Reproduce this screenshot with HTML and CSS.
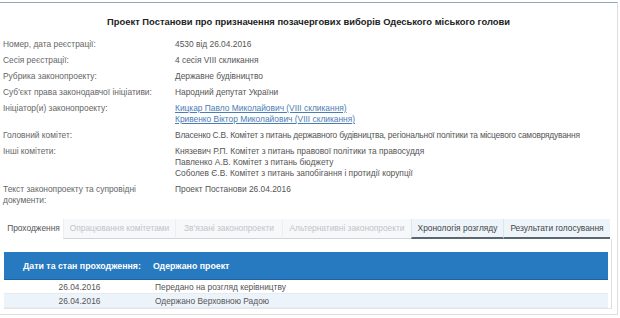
FILE: index.html
```html
<!DOCTYPE html>
<html lang="uk">
<head>
    <meta charset="UTF-8">
    <title>Проект Постанови</title>
    <link rel="stylesheet" href="styles.css">
</head>
<body>

<div id="card">
    <h1 class="title">Проект Постанови про призначення позачергових виборів Одеського міського голови</h1>

    <div class="info">
        <div class="label">Номер, дата реєстрації:</div>
        <div class="value">4530 від 26.04.2016</div>

        <div class="label">Сесія реєстрації:</div>
        <div class="value">4 сесія VIII скликання</div>

        <div class="label">Рубрика законопроекту:</div>
        <div class="value">Державне будівництво</div>

        <div class="label">Суб'єкт права законодавчої ініціативи:</div>
        <div class="value">Народний депутат України</div>

        <div class="label">Ініціатор(и) законопроекту:</div>
        <div class="value">
            <a href="#">Кицкар Павло Миколайович (VIII скликання)</a><br>
            <a href="#">Кривенко Віктор Миколайович (VIII скликання)</a>
        </div>

        <div class="label">Головний комітет:</div>
        <div class="value tight">Власенко С.В. Комітет з питань державного будівництва, регіональної політики та місцевого самоврядування</div>

        <div class="label">Інші комітети:</div>
        <div class="value">
            Князевич Р.П. Комітет з питань правової політики та правосуддя<br>
            Павленко А.В. Комітет з питань бюджету<br>
            Соболев Є.В. Комітет з питань запобігання і протидії корупції
        </div>

        <div class="label">Текст законопроекту та супровідні<br>документи:</div>
        <div class="value">Проект Постанови 26.04.2016</div>
    </div>

    <ul class="tabs">
        <li class="tab current">Проходження</li>
        <li class="tab off w1">Опрацювання комітетами</li>
        <li class="tab off w2">Зв'язані законопроекти</li>
        <li class="tab off w3">Альтернативні законопроекти</li>
        <li class="tab on w4">Хронологія розгляду</li>
        <li class="tab on w5">Результати голосування</li>
    </ul>

    <div class="panel">
        <div class="head">
            <div class="date-col">Дати та стан проходження:</div>
            <div>Одержано проект</div>
        </div>
        <div class="row">
            <div class="date-col">26.04.2016</div>
            <div>Передано на розгляд керівництву</div>
        </div>
        <div class="row alt">
            <div class="date-col">26.04.2016</div>
            <div>Одержано Верховною Радою</div>
        </div>
    </div>
</div>

</body>
</html>
```

FILE: styles.css
```css
body {
    margin: 0;
    background-color: white;
    font-family: "Liberation Sans", Arial, sans-serif;
    font-size: 8.4px;
    color: #555;
}
#card {
    width: 618px;
    height: 313px;
    margin-top: 2px;
    border-top: 1px solid #8ea8b8;
    border-right: 1px solid #ddd;
    border-bottom: 1px solid #ddd;
    box-sizing: border-box;
}
.title {
    margin: 0;
    padding: 13px 0 0 0;
    height: 23px;
    text-align: center;
    font-size: 9.4px;
    font-weight: bold;
    color: #222;
}
.info {
    display: grid;
    grid-template-columns: 172px 1fr;
    padding-left: 3px;
    line-height: 11px;
}
.label,
.value {
    padding-bottom: 5px;
    white-space: nowrap;
}
.label {
    color: #666;
}
.value {
    color: #555;
}
.value.tight {
    letter-spacing: -0.2px;
}
.value a {
    color: #4b7db3;
}
.tabs {
    display: flex;
    list-style: none;
    margin: 8px 0 0 4px;
    padding: 0;
    width: 606px;
}
.tab {
    height: 20px;
    line-height: 19px;
    text-align: center;
    box-sizing: border-box;
    white-space: nowrap;
}
.tab.current {
    width: 59px;
    color: #555;
    background-color: white;
}
.tab.off {
    color: #c0c4c8;
    background-color: #f7f8f9;
    border-bottom: 1px solid #cfd4d8;
    border-left: 1px solid #eceef0;
}
.tab.on {
    color: #444;
    background-color: #edf4fa;
    border-bottom: 2px solid #5b6670;
    border-left: 1px solid #dde4ea;
}
.w1 { width: 112px; }
.w2 { width: 107px; }
.w3 { width: 129px; }
.w4 { width: 92px; }
.w5 { width: 107px; }
.panel {
    margin: 0 5px 0 4px;
    padding: 13px 3px 0 0;
    height: 56px;
    border-right: 1px solid #ddd;
    border-bottom: 1px solid #e4e4e4;
}
.head {
    display: flex;
    align-items: center;
    height: 27px;
    background-color: #2779c0;
    border-bottom: 1px solid #1f64a0;
    color: white;
    font-weight: bold;
    font-size: 8.8px;
}
.head .date-col {
    padding-left: 19px;
    width: 130px;
}
.row {
    display: flex;
    align-items: center;
    height: 13px;
    color: #555;
    border-bottom: 1px solid #e6ebef;
}
.row .date-col {
    width: 151px;
    text-align: center;
}
.row.alt {
    background-color: #edf3fb;
}
```
